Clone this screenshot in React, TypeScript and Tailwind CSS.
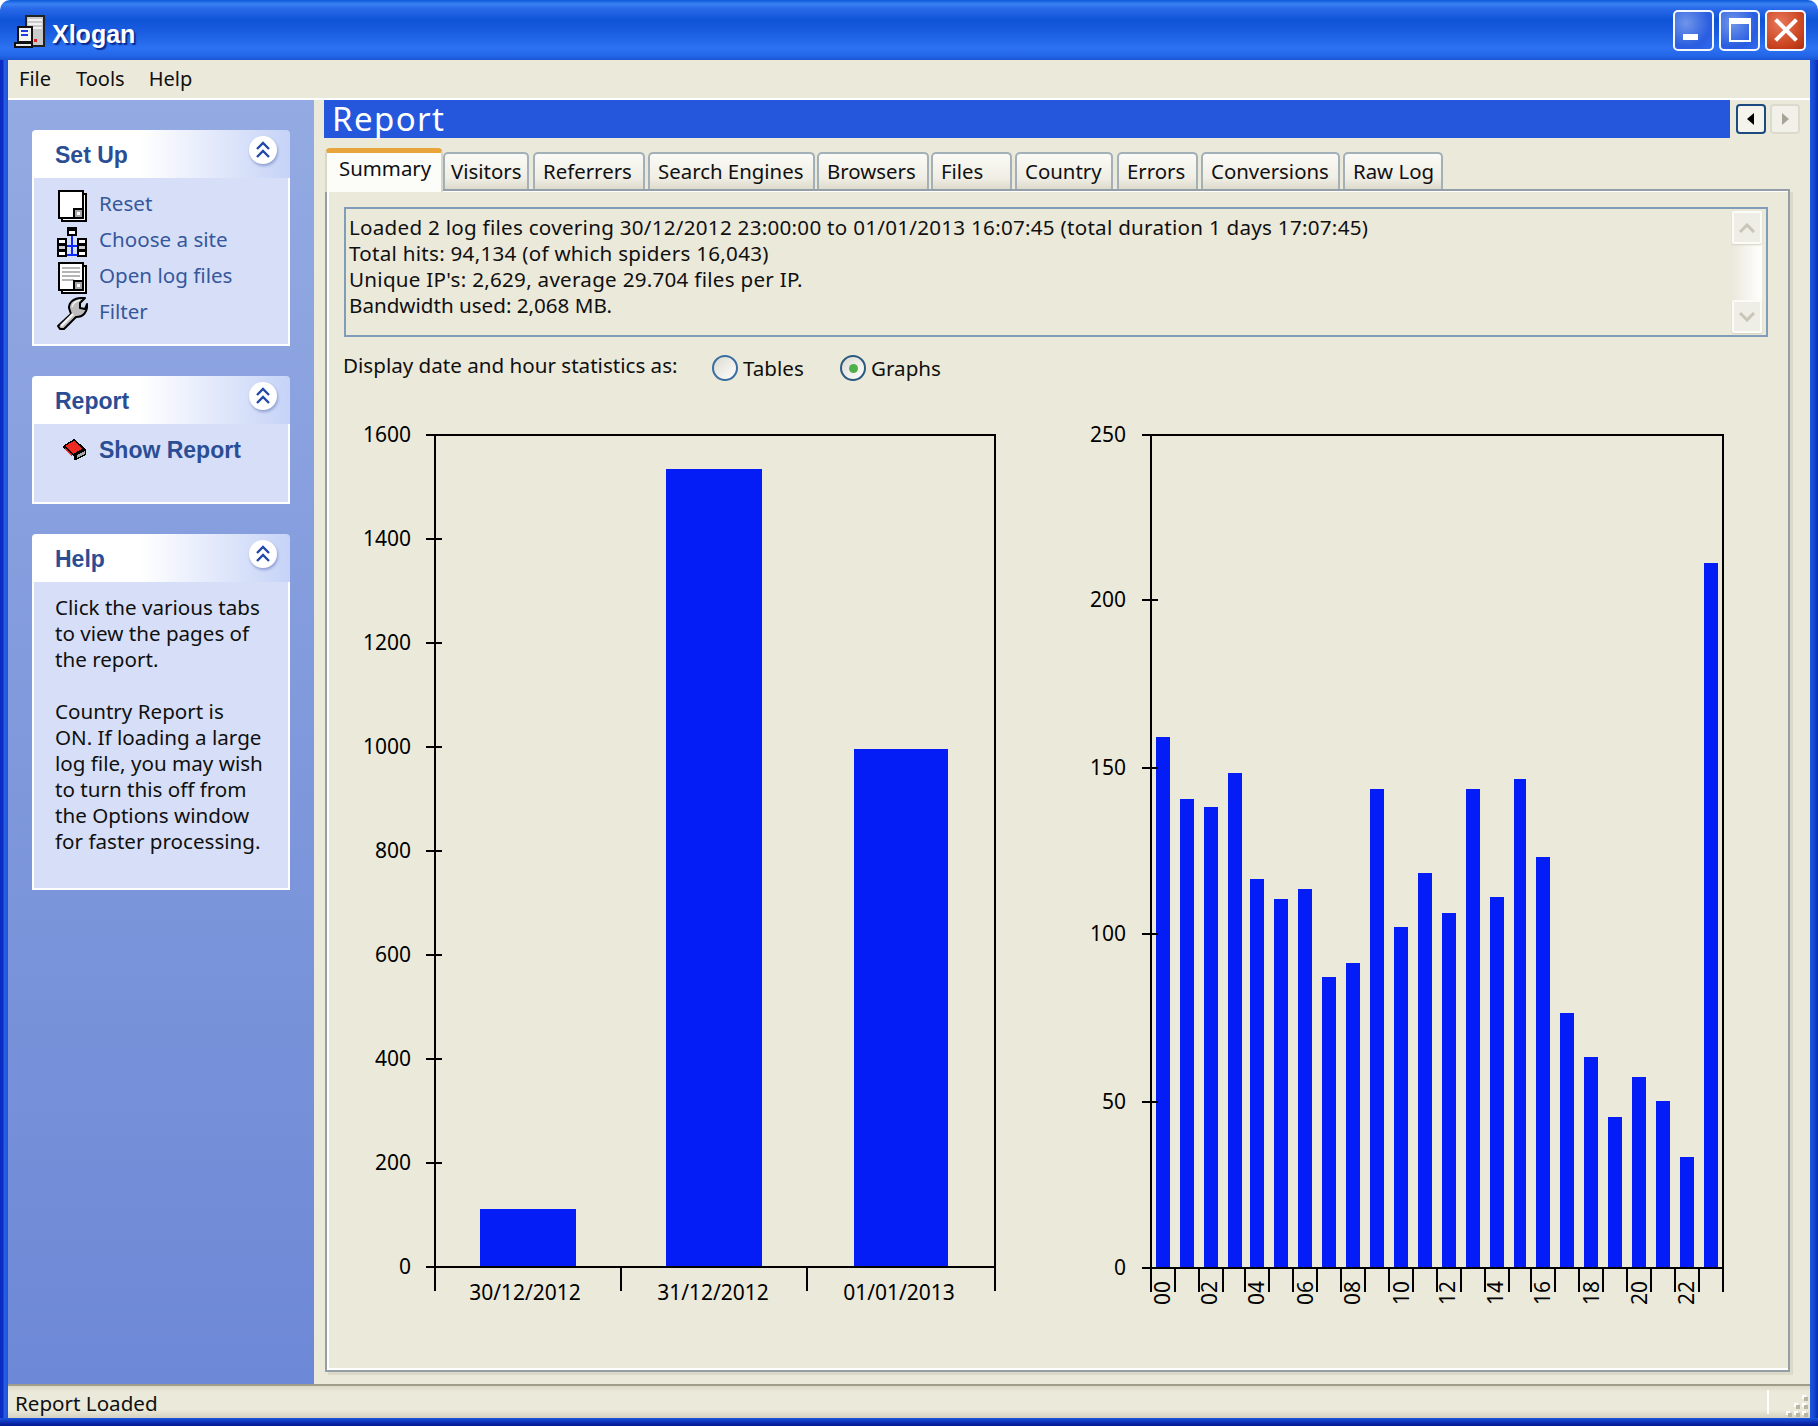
import React from "react";

const tabs = [
  { t: "Visitors", w: 86, ml: 0, pl: 6 },
  { t: "Referrers", w: 112, ml: 4, pl: 8 },
  { t: "Search Engines", w: 167, ml: 3, pl: 8 },
  { t: "Browsers", w: 112, ml: 2, pl: 8 },
  { t: "Files", w: 81, ml: 2, pl: 8 },
  { t: "Country", w: 98, ml: 3, pl: 8 },
  { t: "Errors", w: 81, ml: 4, pl: 8 },
  { t: "Conversions", w: 139, ml: 3, pl: 8 },
  { t: "Raw Log", w: 100, ml: 3, pl: 8 },
];

const hourX = [1156, 1180, 1204, 1228, 1250, 1274, 1298, 1322, 1346, 1370, 1394, 1418, 1442, 1466, 1490, 1514, 1536, 1560, 1584, 1608, 1632, 1656, 1680, 1704];
const hourTop = [738, 800, 808, 774, 880, 900, 890, 978, 964, 790, 928, 874, 914, 790, 898, 780, 858, 1014, 1058, 1118, 1078, 1102, 1158, 564];
const hourTicks = [1151, 1175, 1199, 1223, 1245, 1269, 1293, 1317, 1341, 1365, 1389, 1413, 1437, 1461, 1485, 1509, 1531, 1555, 1579, 1603, 1627, 1651, 1675, 1699, 1723];
const hourLabels: [string, number][] = [["00", 1163], ["02", 1210], ["04", 1257], ["06", 1306], ["08", 1353], ["10", 1402], ["12", 1448], ["14", 1496], ["16", 1543], ["18", 1592], ["20", 1640], ["22", 1687]];

function Chevrons() {
  return (
    <svg width="16" height="18" viewBox="0 0 16 18" fill="none" stroke="#2349a8" strokeWidth="2.4">
      <path d="M2 8 L8 2 L14 8" />
      <path d="M2 16 L8 10 L14 16" />
    </svg>
  );
}

function PanelHead({ title }: { title: string }) {
  return (
    <div className="flex h-[48px] justify-between rounded-t-[4px] bg-[linear-gradient(to_right,#ffffff_0%,#ffffff_42%,#c6d3f7_100%)] pl-[23px]">
      <span className="mt-[12px] text-[23px] font-bold leading-[26px] text-[#2b4d94] font-['Liberation_Sans']">{title}</span>
      <div className="mr-[13px] mt-[6px] flex h-[28px] w-[28px] items-center justify-center rounded-full bg-white shadow-[1px_2px_3px_#8f9fd0]">
        <Chevrons />
      </div>
    </div>
  );
}

function DocIcon({ lines }: { lines?: boolean }) {
  return (
    <svg width="32" height="36" viewBox="0 0 32 36" shapeRendering="crispEdges">
      <rect x="6" y="8" width="24" height="27" fill="#fff" stroke="#000" strokeWidth="2" />
      <rect x="3" y="5" width="24" height="27" fill="#fff" stroke="#000" strokeWidth="2" />
      {lines && (
        <g fill="#b5b5b5">
          <rect x="6" y="9" width="18" height="2" />
          <rect x="6" y="13" width="18" height="2" />
          <rect x="6" y="17" width="18" height="2" />
          <rect x="6" y="21" width="12" height="2" />
        </g>
      )}
      <rect x="18" y="23" width="9" height="9" fill="#a8a8a8" stroke="#000" strokeWidth="2" />
      <rect x="21" y="26" width="3" height="3" fill="#fff" />
    </svg>
  );
}

function SiteIcon() {
  const stack = (x: number) => (
    <g key={x}>
      <rect x={x} y="16" width="10" height="19" fill="#000" />
      <rect x={x + 2} y="18" width="6" height="3" fill="#fff" />
      <rect x={x + 2} y="24" width="6" height="3" fill="#cfcfcf" />
      <rect x={x + 2} y="30" width="6" height="3" fill="#fff" />
    </g>
  );
  return (
    <svg width="32" height="36" viewBox="0 0 32 36" shapeRendering="crispEdges">
      <rect x="11" y="5" width="10" height="9" fill="#000" />
      <rect x="13" y="9" width="6" height="3" fill="#fff" />
      <rect x="15" y="14" width="2" height="20" fill="#0a28ff" />
      <rect x="11" y="23" width="10" height="2" fill="#0a28ff" />
      <rect x="11" y="32" width="10" height="2" fill="#0a28ff" />
      {stack(1)}
      {stack(21)}
    </svg>
  );
}

function WrenchIcon() {
  return (
    <svg width="32" height="36" viewBox="0 0 32 36">
      <path
        d="M2 32 L15 20 L13 14 C13 8 18 4 25 4 L29 4 L24 9 L24 14 L29 15 L31 10 C32 18 27 23 20 23 L8 35 L4 35 Z"
        fill="#bdbdbd"
        stroke="#000"
        strokeWidth="2"
        strokeLinejoin="round"
      />
      <path d="M5 32 L17 20" stroke="#f2f2f2" strokeWidth="2.5" />
      <path d="M16 13 C17 9 20 7 24 6" stroke="#f2f2f2" strokeWidth="1.5" fill="none" />
    </svg>
  );
}

function BookIcon() {
  return (
    <svg width="26" height="24" viewBox="0 0 26 24" shapeRendering="crispEdges">
      <path d="M1 8 L12 1 L24 11 L24 17 L14 22 L12 22 L12 18 L7 16 L1 10 Z" fill="#000" />
      <path d="M3 8 L12 3 L20 11 L11 16 Z" fill="#ee2a22" />
      <path d="M3 10 L10 17 L10 19 L3 12 Z" fill="#ee2a22" />
      <path d="M15 17 L23 13 L23 16 L15 20 Z" fill="#a8a8a8" />
    </svg>
  );
}

function AppIcon() {
  return (
    <svg width="32" height="34" viewBox="0 0 32 34" shapeRendering="crispEdges" className="mt-[3px]">
      <rect x="12" y="1" width="18" height="30" fill="#c9c9c9" stroke="#222" strokeWidth="1.5" />
      <rect x="14" y="4" width="14" height="2" fill="#f1f1f1" />
      <rect x="14" y="8" width="14" height="2" fill="#f1f1f1" />
      <rect x="14" y="12" width="14" height="2" fill="#f1f1f1" />
      <rect x="4" y="12" width="14" height="15" fill="#f4f4f4" stroke="#111" strokeWidth="2" />
      <rect x="7" y="15" width="7" height="2" fill="#1e3ee0" />
      <rect x="7" y="19" width="7" height="2" fill="#1e3ee0" />
      <rect x="20" y="24" width="3" height="3" fill="#e02020" />
      <rect x="1" y="28" width="17" height="4" fill="#e8e8e8" stroke="#111" strokeWidth="1.5" />
    </svg>
  );
}

function WinButton({ kind }: { kind: "min" | "max" | "close" }) {
  const bg =
    kind === "close"
      ? "bg-[radial-gradient(circle_at_35%_30%,#e8795a,#c8401c_70%,#a83010)]"
      : "bg-[radial-gradient(circle_at_30%_30%,#6f95ea,#2a5de0_65%,#2f6af0)]";
  return (
    <div className={`flex h-[41px] w-[41px] items-center justify-center rounded-[5px] border-2 border-[#f4f7fd] ${bg}`}>
      {kind === "min" && <div className="mr-[6px] mt-[14px] h-[6px] w-[15px] bg-white" />}
      {kind === "max" && (
        <div className="h-[24px] w-[22px] border-2 border-t-[6px] border-white" />
      )}
      {kind === "close" && (
        <svg width="24" height="24" viewBox="0 0 24 24" stroke="#fff" strokeWidth="4" strokeLinecap="square">
          <path d="M3 3 L21 21 M21 3 L3 21" />
        </svg>
      )}
    </div>
  );
}

function LeftChart() {
  const ys: [string, number][] = [["1600", 436], ["1400", 540], ["1200", 644], ["1000", 748], ["800", 852], ["600", 956], ["400", 1060], ["200", 1164], ["0", 1268]];
  return (
    <svg width="650" height="905" viewBox="360 410 650 905" shapeRendering="crispEdges" className="shrink-0">
      {[[480, 96, 1210], [666, 96, 470], [854, 94, 750]].map(([x, w, y]) => (
        <rect key={x} x={x} y={y} width={w} height={1267 - y} fill="#041cf5" />
      ))}
      <g fill="#000">
        <rect x="434" y="435" width="2" height="857" />
        <rect x="994" y="435" width="2" height="857" />
        <rect x="426" y="435" width="570" height="2" />
        <rect x="426" y="1267" width="570" height="2" />
        <rect x="620" y="1267" width="2" height="25" />
        <rect x="806" y="1267" width="2" height="25" />
        {ys.slice(1, 8).map(([, y]) => (
          <rect key={y} x="426" y={y - 1} width="16" height="2" />
        ))}
      </g>
      <g fontSize="21" fill="#000" textAnchor="end">
        {ys.map(([l, y]) => (
          <text key={l} x="411" y={y + 7}>{l}</text>
        ))}
      </g>
      <g fontSize="21" fill="#000" textAnchor="middle">
        <text x="525" y="1301">30/12/2012</text>
        <text x="713" y="1301">31/12/2012</text>
        <text x="899" y="1301">01/01/2013</text>
      </g>
    </svg>
  );
}

function RightChart() {
  const ys: [string, number][] = [["250", 436], ["200", 601], ["150", 769], ["100", 935], ["50", 1103], ["0", 1269]];
  return (
    <svg width="660" height="905" viewBox="1080 410 660 905" shapeRendering="crispEdges" className="shrink-0">
      {hourX.map((x, i) => (
        <rect key={x} x={x} y={hourTop[i]} width={i === 15 ? 12 : 14} height={1268 - hourTop[i]} fill="#041cf5" />
      ))}
      <g fill="#000">
        <rect x="1150" y="435" width="2" height="835" />
        <rect x="1722" y="435" width="2" height="835" />
        <rect x="1142" y="435" width="582" height="2" />
        <rect x="1142" y="1268" width="582" height="2" />
        {ys.slice(1, 5).map(([, y]) => (
          <rect key={y} x="1142" y={y - 1} width="16" height="2" />
        ))}
        {hourTicks.map((x) => (
          <rect key={x} x={x - 1} y="1270" width="2" height="23" />
        ))}
      </g>
      <g fontSize="21" fill="#000" textAnchor="end">
        {ys.map(([l, y]) => (
          <text key={l} x="1126" y={y + 7}>{l}</text>
        ))}
        {hourLabels.map(([l, x]) => (
          <text key={l} transform={`translate(${x + 7} 1282) rotate(-90)`}>{l}</text>
        ))}
      </g>
    </svg>
  );
}

function Radio({ on, label, w }: { on?: boolean; label: string; w: number }) {
  return (
    <div className="flex h-[34px] items-center" style={{ width: w }}>
      <div className={`flex h-[26px] w-[26px] items-center justify-center rounded-full border-2 ${on ? "border-[#2a5a80]" : "border-[#3a6ea0]"} bg-[linear-gradient(135deg,#dcdad0,#ffffff)]`}>
        {on && <div className="h-[9px] w-[9px] rounded-full bg-[#4fb04a]" />}
      </div>
      <span className="ml-[5px] leading-[26px]">{label}</span>
    </div>
  );
}

function ScrollBtn({ up }: { up?: boolean }) {
  return (
    <div className="flex h-[33px] w-[30px] items-center justify-center rounded-[2px] border-2 border-[#fbfbf8] bg-[#efeee6] shadow-[0_1px_2px_#d4d1c0]">
      <svg width="16" height="10" viewBox="0 0 16 10" fill="none" stroke="#c8c6b8" strokeWidth="3">
        <path d={up ? "M1 9 L8 2 L15 9" : "M1 1 L8 8 L15 1"} />
      </svg>
    </div>
  );
}

export default function App() {
  return (
    <div className="flex h-[1426px] w-[1818px] flex-col overflow-hidden rounded-t-[10px] font-['Noto_Sans',sans-serif] text-[20.6px] text-[#101010]">
      {/* title bar */}
      <div className="flex h-[60px] shrink-0 items-center bg-[linear-gradient(to_bottom,#0b5ad8_0px,#3a82f4_4px,#2a6bea_8px,#0f53d6_20px,#1a5de0_32px,#2c72f2_48px,#2366e8_56px,#1a55d0_60px)] pl-[14px] pr-[12px]">
        <AppIcon />
        <span className="ml-[6px] mt-[10px] text-[25px] font-bold text-white font-['Liberation_Sans'] [text-shadow:2px_2px_1px_#0a2a90]">Xlogan</span>
        <div className="ml-auto flex gap-[5px]">
          <WinButton kind="min" />
          <WinButton kind="max" />
          <WinButton kind="close" />
        </div>
      </div>

      {/* body with window frame */}
      <div className="flex min-h-0 flex-1 flex-col bg-[linear-gradient(to_right,#0a2cc4_0px,#0a2cc4_3px,#2a5fe0_4px,#1c55dc_8px,#1c55dc_1810px,#1448d4_1814px,#0a2cb0_1818px)] px-[8px]">
        {/* menu */}
        <div className="flex h-[38px] shrink-0 items-center bg-[#ebe9da] pl-[11px] text-[20px]">
          <span>File</span>
          <span className="ml-[25px]">Tools</span>
          <span className="ml-[24px]">Help</span>
        </div>
        <div className="h-[2px] shrink-0 bg-white" />

        <div className="flex min-h-0 flex-1 bg-[#ebe9da]">
          {/* sidebar */}
          <aside className="w-[306px] shrink-0 bg-[linear-gradient(to_bottom,#93aae2,#6d88d6)] px-[24px] pt-[30px]">
            <section className="rounded-t-[4px]">
              <PanelHead title="Set Up" />
              <div className="h-[168px] border-x-2 border-b-2 border-white bg-[#d6dff7] pl-[22px] pt-[8px] text-[#37579c]">
                {[
                  ["Reset", <DocIcon key="a" />],
                  ["Choose a site", <SiteIcon key="b" />],
                  ["Open log files", <DocIcon key="c" lines />],
                  ["Filter", <WrenchIcon key="d" />],
                ].map(([t, icon]) => (
                  <div key={t as string} className="flex h-[36px] items-center">
                    {icon}
                    <span className="mb-[2px] ml-[11px] leading-[26px]">{t}</span>
                  </div>
                ))}
              </div>
            </section>
            <section className="mt-[30px]">
              <PanelHead title="Report" />
              <div className="h-[80px] border-x-2 border-b-2 border-white bg-[#d6dff7] pl-[28px] pt-[13px]">
                <div className="flex h-[26px] items-center">
                  <BookIcon />
                  <span className="ml-[11px] text-[23px] font-bold text-[#2b4d94] font-['Liberation_Sans']">Show Report</span>
                </div>
              </div>
            </section>
            <section className="mt-[30px]">
              <PanelHead title="Help" />
              <div className="h-[308px] whitespace-nowrap border-x-2 border-b-2 border-white bg-[#d6dff7] pl-[21px] pt-[12px] leading-[26px]">
                Click the various tabs<br />
                to view the pages of<br />
                the report.<br />
                <br />
                Country Report is<br />
                ON. If loading a large<br />
                log file, you may wish<br />
                to turn this off from<br />
                the Options window<br />
                for faster processing.
              </div>
            </section>
          </aside>

          {/* main */}
          <main className="min-w-0 flex-1 pl-[10px]">
            <div className="flex">
              <div className="h-[38px] w-[1406px] bg-[#2457db] pl-[8px] text-[33px] leading-[38px] tracking-[1.4px] text-white">Report</div>
              <div className="ml-[6px] mt-[4px] flex h-[30px] w-[30px] items-center justify-center rounded-[4px] border-2 border-[#1c4a80] bg-[#f4f3ec]">
                <svg width="8" height="12" viewBox="0 0 8 12"><path d="M7 0 V12 L0 6 Z" fill="#000" /></svg>
              </div>
              <div className="ml-[4px] mt-[4px] flex h-[30px] w-[30px] items-center justify-center rounded-[4px] border-2 border-[#dcdacc] bg-[#f2f1e9]">
                <svg width="8" height="12" viewBox="0 0 8 12"><path d="M1 0 V12 L8 6 Z" fill="#a5a497" /></svg>
              </div>
            </div>

            {/* tabs */}
            <div className="ml-[1px] mt-[10px] flex h-[41px] items-start text-[20.4px]">
              <div className="relative z-10 h-[44px] w-[118px] rounded-t-[5px] border-x-2 border-t-[5px] border-x-[#d8d6c8] border-t-[#e8a53c] bg-[#fcfcf9] pl-[12px] leading-[30px]">
                Summary
              </div>
              {tabs.map((t) => (
                <div
                  key={t.t}
                  className="mt-[4px] h-[37px] whitespace-nowrap rounded-t-[5px] border-x-2 border-t-2 border-[#a4b0b8] bg-[linear-gradient(to_bottom,#fafaf6,#f0eee4_70%,#dcdacb)] leading-[35px]"
                  style={{ width: t.w, marginLeft: t.ml, paddingLeft: t.pl }}
                >
                  {t.t}
                </div>
              ))}
            </div>

            {/* panel */}
            <div className="ml-[1px] h-[1183px] w-[1465px] border-2 border-[#939ea6] shadow-[3px_3px_0_#dcd9c8]">
              <div className="h-full border-b-2 border-l-2 border-t border-white pl-[15px] pt-[15px]">
                <div className="flex h-[130px] w-[1424px] border-2 border-[#7f9db9] pb-[2px] pr-[4px] pt-[2px]">
                  <div className="min-w-0 flex-1 whitespace-nowrap pl-[3px] pt-[3px] leading-[26px] tracking-[0.27px]">
                    Loaded 2 log files covering 30/12/2012 23:00:00 to 01/01/2013 16:07:45 (total duration 1 days 17:07:45)<br />
                    Total hits: 94,134 (of which spiders 16,043)<br />
                    Unique IP's: 2,629, average 29.704 files per IP.<br />
                    <span className="tracking-normal">Bandwidth used: 2,068 MB.</span>
                  </div>
                  <div className="flex w-[30px] flex-col justify-between bg-[linear-gradient(to_right,#ebe9dc,#ffffff)]">
                    <ScrollBtn up />
                    <ScrollBtn />
                  </div>
                </div>

                <div className="ml-[-1px] mt-[14px] flex h-[34px]">
                  <span className="w-[369px] pt-[1px] leading-[26px]">Display date and hour statistics as:</span>
                  <Radio label="Tables" w={128} />
                  <Radio on label="Graphs" w={120} />
                </div>

                <div className="ml-[16px] mt-[24px] flex gap-[70px]">
                  <LeftChart />
                  <RightChart />
                </div>
              </div>
            </div>
          </main>
        </div>

        {/* status bar */}
        <div className="flex h-[34px] shrink-0 items-center border-t-2 border-[#a09d8a] bg-[linear-gradient(to_bottom,#dcd9c8,#ebe9da_6px,#ebe9da_24px,#d4d1bf)] pl-[7px] pr-[2px]">
          <span className="pt-[3px]">Report Loaded</span>
          <div className="ml-auto h-[24px] w-[2px] bg-white" />
          <svg width="22" height="22" viewBox="0 0 22 22" className="ml-[17px] mt-[8px]" fill="#fff" shapeRendering="crispEdges">
            {[[16, 0], [8, 8], [16, 8], [0, 16], [8, 16], [16, 16]].map(([x, y]) => (
              <g key={`${x}-${y}`}>
                <rect x={x} y={y} width="4" height="4" fill="#fff" />
                <rect x={x + 2} y={y + 2} width="4" height="4" fill="#b8b5a2" />
              </g>
            ))}
          </svg>
        </div>
      </div>

      {/* bottom frame */}
      <div className="h-[8px] shrink-0 bg-[linear-gradient(to_bottom,#1a55dc,#0a2cb0_60%,#001a90)]" />
    </div>
  );
}
